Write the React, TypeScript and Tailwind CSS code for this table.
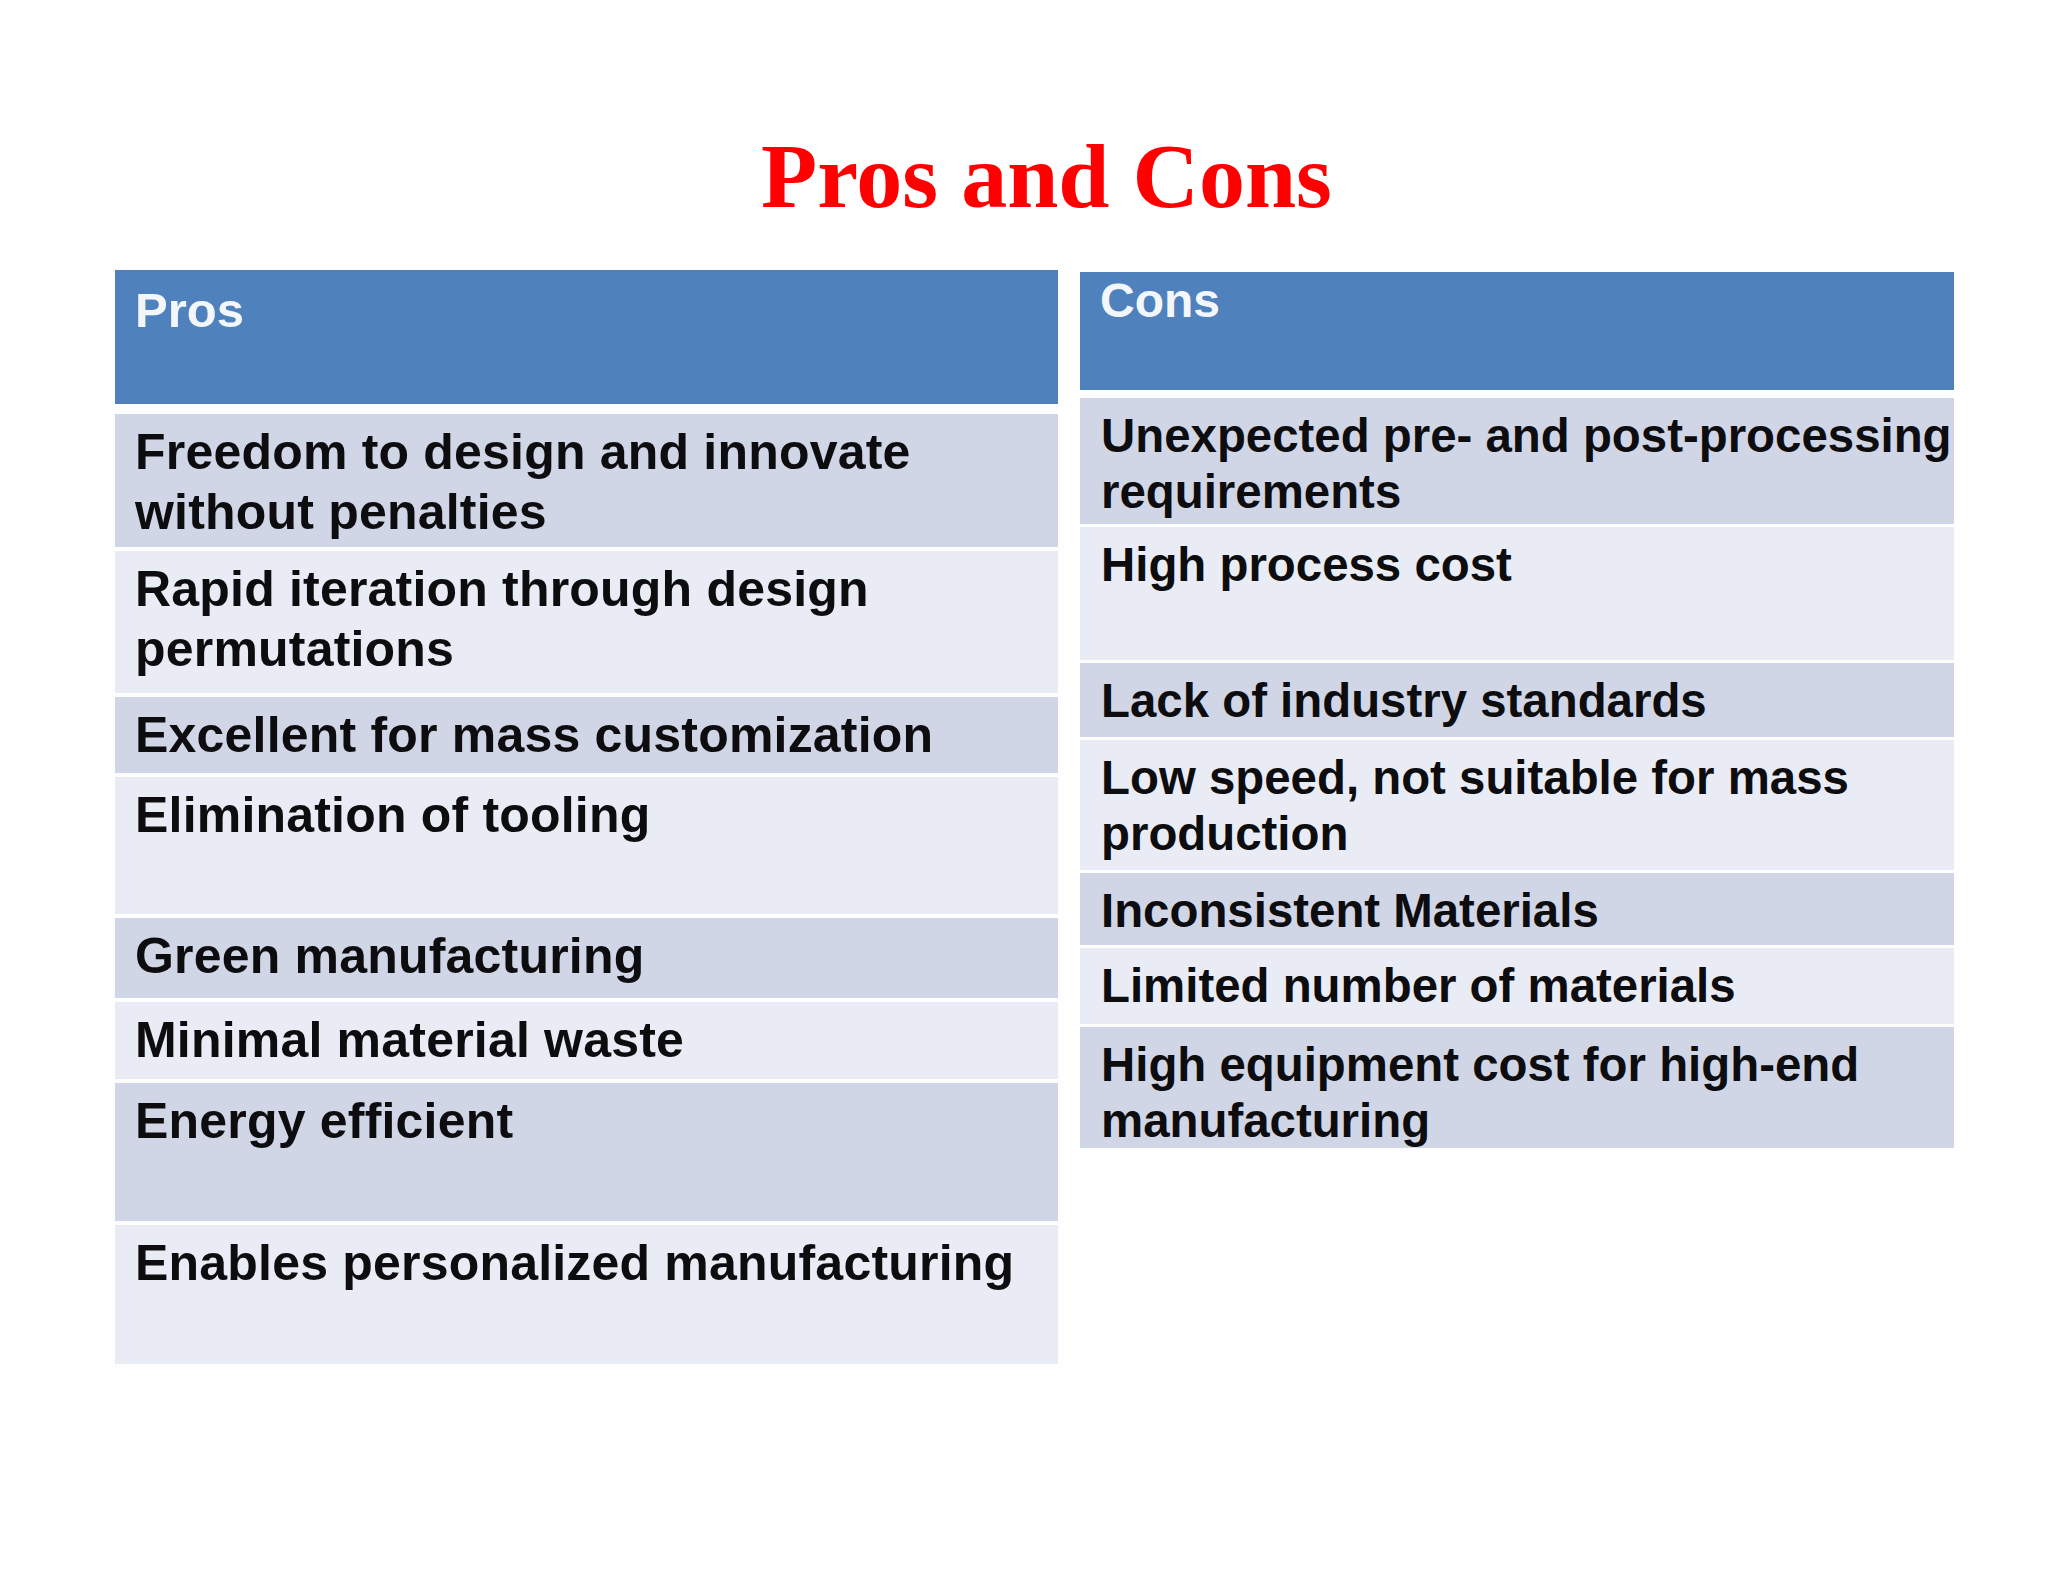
import React from "react";

type Row = { lines: string[]; h: number; dark: boolean };

const pros: Row[] = [
  { lines: ["Freedom to design and innovate", "without penalties"], h: 133, dark: true },
  { lines: ["Rapid iteration through design", "permutations"], h: 142, dark: false },
  { lines: ["Excellent for mass customization"], h: 76, dark: true },
  { lines: ["Elimination of tooling"], h: 137, dark: false },
  { lines: ["Green manufacturing"], h: 80, dark: true },
  { lines: ["Minimal material waste"], h: 77, dark: false },
  { lines: ["Energy efficient"], h: 138, dark: true },
  { lines: ["Enables personalized manufacturing"], h: 139, dark: false },
];

const cons: Row[] = [
  { lines: ["Unexpected pre- and post-processing", "requirements"], h: 126, dark: true },
  { lines: ["High process cost"], h: 133, dark: false },
  { lines: ["Lack of industry standards"], h: 74, dark: true },
  { lines: ["Low speed, not suitable for mass", "production"], h: 130, dark: false },
  { lines: ["Inconsistent Materials"], h: 72, dark: true },
  { lines: ["Limited number of materials"], h: 76, dark: false },
  { lines: ["High equipment cost for high-end", "manufacturing"], h: 121, dark: true },
];

export default function App() {
  return (
    <div
      className="w-[2048px] h-[1582px] bg-[#fefeff] overflow-hidden"
      style={{ fontFamily: '"Liberation Sans", Arial, sans-serif' }}
    >
      <div className="pt-[130px] pl-[761px] h-[270px]">
        <h1
          className="text-[92px] leading-none font-bold text-[#ff0000] whitespace-nowrap"
          style={{ fontFamily: '"Liberation Serif", "Times New Roman", serif' }}
        >
          Pros and Cons
        </h1>
      </div>
      <div className="flex items-start pl-[115px] gap-[22px]">
        <div className="w-[943px] flex flex-col gap-[4px]">
          <div className="h-[134px] mb-[6px] bg-[#4f81bd] pl-[20px] pt-[10px] text-[49px] leading-[60px] font-bold text-[#f3f7fb]">
            Pros
          </div>
          {pros.map((r, i) => (
            <div
              key={i}
              className={`pl-[20px] pt-[8px] text-[50px] tracking-[0.2px] leading-[60px] font-bold text-[#0d0d10] whitespace-nowrap ${
                r.dark ? "bg-[#d1d6e7]" : "bg-[#e9ecf5]"
              }`}
              style={{ height: r.h }}
            >
              {r.lines.map((l, j) => (
                <div key={j}>{l}</div>
              ))}
            </div>
          ))}
        </div>
        <div className="w-[874px] mt-[2px] flex flex-col gap-[3px]">
          <div className="h-[118px] mb-[5px] bg-[#4f81bd] pl-[20px] pt-[1px] text-[48px] leading-[56px] font-bold text-[#f3f7fb]">
            Cons
          </div>
          {cons.map((r, i) => (
            <div
              key={i}
              className={`pl-[21px] pt-[10px] text-[47.4px] leading-[56px] font-bold text-[#0d0d10] whitespace-nowrap ${
                r.dark ? "bg-[#d1d6e7]" : "bg-[#e9ecf5]"
              }`}
              style={{ height: r.h }}
            >
              {r.lines.map((l, j) => (
                <div key={j}>{l}</div>
              ))}
            </div>
          ))}
        </div>
      </div>
    </div>
  );
}
